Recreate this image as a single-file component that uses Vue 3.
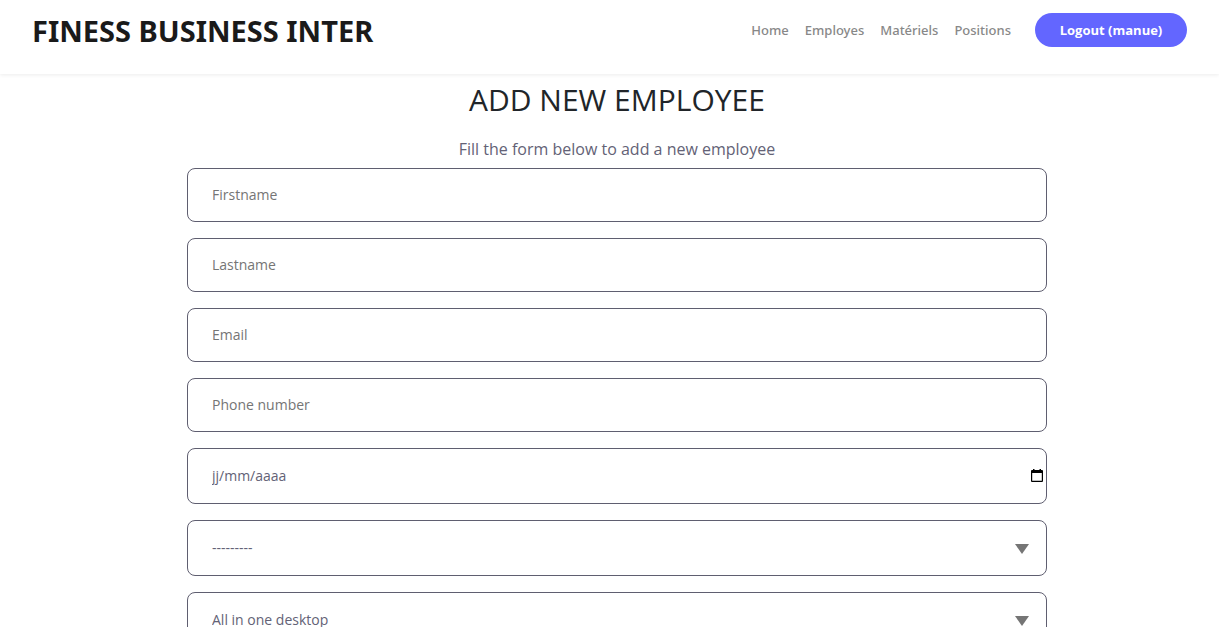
<script setup>
import { ref } from 'vue'

const links = ['Home', 'Employes', 'Matériels', 'Positions']
const fields = [
  { id: 'firstname', label: 'Firstname', type: 'text' },
  { id: 'lastname', label: 'Lastname', type: 'text' },
  { id: 'email', label: 'Email', type: 'email' },
  { id: 'phone', label: 'Phone number', type: 'tel' }
]
const position = ref('---------')
const material = ref('All in one desktop')
</script>

<template>
  <header class="header">
    <a class="brand" href="#">FINESS BUSINESS INTER</a>
    <nav class="nav">
      <a v-for="link in links" :key="link" class="nav-link" href="#">{{ link }}</a>
      <button class="logout" type="button">Logout (manue)</button>
    </nav>
  </header>
  <main class="main">
    <h1 class="title">ADD NEW EMPLOYEE</h1>
    <p class="subtitle">Fill the form below to add a new employee</p>
    <form class="form" @submit.prevent>
      <input
        v-for="field in fields"
        :id="field.id"
        :key="field.id"
        class="control"
        :type="field.type"
        :placeholder="field.label"
        :aria-label="field.label"
      />
      <div class="wrap">
        <input id="date" class="control tall date" type="text" placeholder="jj/mm/aaaa" aria-label="Date" />
        <button class="picker" type="button" aria-label="Open calendar">
          <svg width="12" height="13" viewBox="0 0 12 13">
            <path fill="#000" fill-rule="evenodd" d="M2 0h1.5v1h5V0H10v1h1a1 1 0 0 1 1 1v10a1 1 0 0 1-1 1H1a1 1 0 0 1-1-1V2a1 1 0 0 1 1-1h1zM1.2 4v7.8h9.6V4z" />
          </svg>
        </button>
      </div>
      <div class="wrap">
        <select id="position" v-model="position" class="control tall" aria-label="Position">
          <option>---------</option>
        </select>
        <svg class="arrow" width="14" height="10" viewBox="0 0 14 10"><path fill="#757575" d="M0 0h14L7 10z" /></svg>
      </div>
      <div class="wrap">
        <select id="material" v-model="material" class="control tall" aria-label="Material">
          <option>All in one desktop</option>
        </select>
        <svg class="arrow" width="14" height="10" viewBox="0 0 14 10"><path fill="#757575" d="M0 0h14L7 10z" /></svg>
      </div>
    </form>
  </main>
</template>

<style>
body {
  background: #fff;
  font-family: "Open Sans", "Noto Sans", sans-serif;
}
</style>

<style scoped>
* {
  box-sizing: border-box;
}
.header {
  display: flex;
  justify-content: space-between;
  align-items: flex-start;
  height: 74px;
  padding: 0 32px;
  box-shadow: 0 1px 4px rgba(0, 0, 0, 0.08);
}
.brand {
  font-family: "Noto Sans", sans-serif;
  font-size: 29px;
  font-weight: 700;
  line-height: 62px;
  color: #1a1a1a;
  text-decoration: none;
  white-space: nowrap;
}
.nav {
  display: flex;
  align-items: center;
  gap: 16px;
  padding-top: 13px;
  font-family: "Noto Sans", sans-serif;
}
.nav-link {
  font-size: 13px;
  font-weight: 500;
  line-height: 34px;
  color: #888;
  text-decoration: none;
}
.logout {
  width: 152px;
  height: 34px;
  margin-left: 8px;
  padding: 0;
  border: 0;
  border-radius: 17px;
  background: #6366ff;
  color: #fff;
  font-family: "Open Sans", sans-serif;
  font-size: 13px;
  font-weight: 700;
}
.main {
  padding: 6px 0 16px 15px;
}
.title {
  margin: 0;
  font-size: 30px;
  font-weight: 400;
  line-height: 40px;
  text-align: center;
  color: #212529;
}
.subtitle {
  margin: 16px 0 6px;
  font-size: 16px;
  line-height: 26px;
  text-align: center;
  color: #636276;
}
.form {
  display: flex;
  flex-direction: column;
  gap: 16px;
  max-width: 860px;
  margin: 0 auto;
}
.wrap {
  position: relative;
}
.control {
  display: block;
  width: 100%;
  height: 54px;
  padding: 0 24px 2px;
  border: 1px solid #5f5e70;
  border-radius: 8px;
  background: #fff;
  color: #636276;
  font-family: "Open Sans", "Noto Sans", sans-serif;
  font-size: 14px;
  appearance: none;
}
.control::placeholder {
  color: #757575;
  opacity: 1;
}
.tall {
  height: 56px;
}
.date::placeholder {
  color: #636276;
}
.picker {
  position: absolute;
  top: 0;
  right: 0;
  display: flex;
  align-items: center;
  height: 54px;
  padding: 0 4px;
  border: 0;
  background: none;
}
.arrow {
  position: absolute;
  top: 24px;
  right: 18px;
  pointer-events: none;
}
</style>
